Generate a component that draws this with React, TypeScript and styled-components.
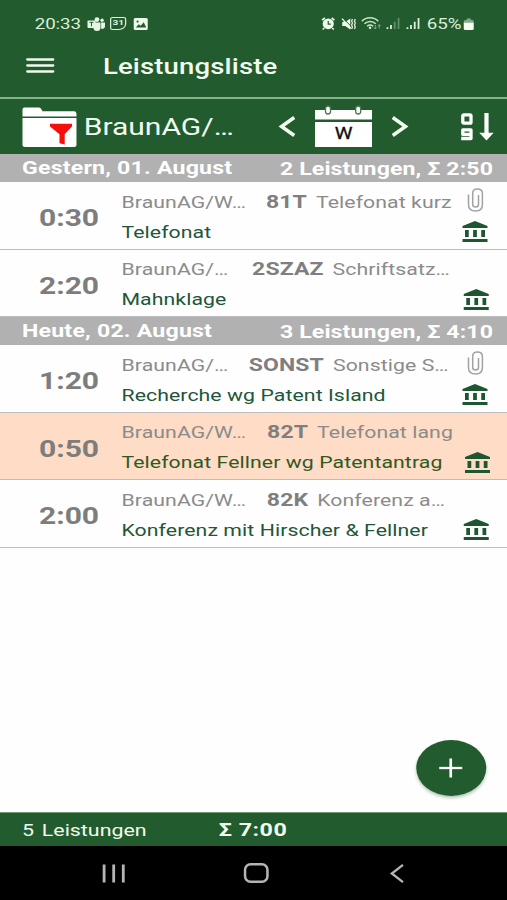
import React from "react";
import styled, { createGlobalStyle } from "styled-components";
import { MdAccountBalance } from "react-icons/md";

const GREEN = "#225b2d";
const INK = "#f1fbee";

const GlobalStyle = createGlobalStyle`
  * { box-sizing: border-box; }
  body { margin: 0; overflow: hidden; background: #fdfdfd; }
`;

const Screen = styled.div`
  width: 405.6px;
  height: 900px;
  display: flex;
  flex-direction: column;
  transform: scaleX(1.25);
  transform-origin: 0 0;
  overflow: hidden;
  font-family: Roboto, sans-serif;
  background: #fefefe;
  position: relative;
`;

const Icon = styled.svg<{ $w: number; $h: number }>`
  display: block;
  flex: none;
  width: ${(p) => p.$w / 1.25}px;
  height: ${(p) => p.$h}px;
  overflow: visible;
`;

const AppHeader = styled.header`
  height: 99px;
  flex: none;
  background: ${GREEN};
  color: ${INK};
  border-bottom: 2.5px solid #86b38b;
`;

const StatusBar = styled.div`
  height: 46px;
  padding: 1px 26.8px 0 27.8px;
  display: flex;
  align-items: center;
  justify-content: space-between;
  font-size: 15px;
  color: #dcefd9;
`;

const StatusGroup = styled.div<{ $gap: number }>`
  display: flex;
  align-items: center;
  gap: ${(p) => p.$gap}px;
`;

const Clock = styled.span`
  width: 37.6px;
  font-size: 15px;
  letter-spacing: -0.1px;
`;

const Percent = styled.span`
  margin: 0 -2.6px 0 1px;
  letter-spacing: -0.1px;
`;

const TitleBar = styled.div`
  height: 40px;
  padding-left: 20.8px;
  display: flex;
  align-items: center;
  gap: 39.2px;
`;

const Title = styled.h1`
  margin: 0;
  padding-top: 1px;
  font-size: 22px;
  font-weight: 500;
  line-height: 40px;
  letter-spacing: 0.12px;
`;

const FilterBar = styled.div`
  height: 55px;
  flex: none;
  padding: 0 10.6px 0 17.6px;
  background: ${GREEN};
  color: ${INK};
  display: flex;
  align-items: center;
`;

const Matter = styled.span`
  width: 162.2px;
  padding: 1px 0 0 6.2px;
  font-size: 24px;
  line-height: 54px;
`;

const PeriodNav = styled.div`
  flex: 1;
  display: flex;
  align-items: center;
  gap: 15.6px;
`;

const GroupHeader = styled.div`
  height: 28px;
  flex: none;
  padding: 0 11.2px 0 17.6px;
  display: flex;
  justify-content: space-between;
  align-items: center;
  background: #b1b1b1;
  color: #fff;
  font-size: 18.5px;
  font-weight: 700;
  letter-spacing: 0.16px;
`;

const GroupTotal = styled.span`
  padding-top: 1px;
  letter-spacing: 0.08px;
`;

const Entry = styled.article<{ $selected?: boolean }>`
  height: 67.5px;
  flex: none;
  display: grid;
  grid-template-columns: 97.2px 1fr 44px;
  background: ${(p) => (p.$selected ? "#fedcc6" : "#fefefe")};
  border-bottom: 1.5px solid #bcbcbc;
`;

const Duration = styled.div`
  padding: 4px 0 0 31.2px;
  color: #7d7d7d;
  font-size: 24px;
  font-weight: 700;
  line-height: 64px;
`;

const Details = styled.div`
  padding-top: 4.5px;
  white-space: nowrap;
  line-height: 30px;
  letter-spacing: 0.06px;
`;

const Activity = styled.div<{ $matter: number }>`
  display: grid;
  grid-template-columns: ${(p) => p.$matter}px auto 1fr;
  color: #8b8b8b;
  font-size: 17px;
`;

const Code = styled.b`
  color: #7f7f7f;
  font-size: 18.4px;
  margin-right: 7.2px;
  letter-spacing: 0.1px;
`;

const Note = styled.div<{ $selected?: boolean }>`
  color: ${(p) => (p.$selected ? "#31591f" : "#215638")};
  font-size: 17px;
`;

const Flags = styled.div<{ $clip?: boolean }>`
  height: 66px;
  padding: 6px ${(p) => (p.$clip ? 13.5 : 12.3)}px 4px 0;
  display: flex;
  flex-direction: column;
  align-items: flex-end;
  justify-content: ${(p) => (p.$clip ? "space-between" : "flex-end")};
  color: #1d5630;

  > svg:last-child { flex: none; width: 24px; height: 24px; }
`;

const ClipBox = styled.div`
  padding-right: 5.4px;
`;

const List = styled.main`
  flex: 1;
`;

const Summary = styled.footer`
  height: 34px;
  flex: none;
  padding-left: 17.6px;
  background: ${GREEN};
  border-top: 1px solid #6c9b72;
  color: ${INK};
  display: flex;
  align-items: center;
`;

const Count = styled.span`
  width: 157.4px;
  font-size: 17.1px;
  word-spacing: 2px;
`;

const Total = styled.b`
  font-size: 18.6px;
  letter-spacing: 0.4px;
`;

const SystemNav = styled.nav`
  height: 54px;
  flex: none;
  background: #000;
  padding-left: 82px;
  display: flex;
  align-items: center;
`;

const NavKey = styled.div<{ $w: number }>`
  width: ${(p) => p.$w}px;
`;

const AddButton = styled.button`
  position: absolute;
  right: 17px;
  bottom: 104px;
  width: 56px;
  height: 56px;
  padding: 0;
  border: 0;
  border-radius: 50%;
  background: ${GREEN};
  display: grid;
  place-items: center;
  box-shadow: 0 2px 3px rgba(60, 110, 60, 0.4);
`;

type Drawing = { w: number; h: number; children: React.ReactNode };
const Glyph = ({ w, h, children }: Drawing) => (
  <Icon $w={w} $h={h} viewBox={`0 0 ${w} ${h}`} preserveAspectRatio="none" fill="none">
    {children}
  </Icon>
);

const TeamsIcon = () => (
  <Glyph w={18} h={14}>
    <g fill="#e6f5e3">
      <circle cx="9.5" cy="2.6" r="2.4" />
      <circle cx="14.6" cy="3.2" r="1.7" />
      <path d="M6 5.5h7v5a3.5 3.5 0 0 1-7 0zM13.6 5.5H17.5v4a2.6 2.6 0 0 1-3.9 2z" />
      <rect x="0" y="3.5" width="8" height="7.5" rx="0.8" />
    </g>
    <path d="M2 5.3h4M4 5.3v4" stroke={GREEN} strokeWidth="1" />
  </Glyph>
);

const CalendarBadge = styled.span`
  width: 12.8px;
  height: 13px;
  margin-right: 1.4px;
  border: 1.3px solid #dcefd9;
  border-radius: 2px 2px 6px 2px;
  font-size: 8px;
  font-weight: 700;
  line-height: 10.5px;
  text-align: center;
`;

const PictureIcon = () => (
  <Glyph w={14} h={12}>
    <rect width="14" height="12" rx="1.5" fill="#eef9ea" />
    <path d="M2 9.5l3-3.3 2 1.6 3-3.6 2.5 5.3z" fill={GREEN} />
    <circle cx="3.8" cy="3.6" r="1.1" fill={GREEN} />
  </Glyph>
);

const AlarmIcon = () => (
  <Glyph w={14} h={13}>
    <path d="M.8 3.2L3.6 1M13.2 3.2L10.4 1M3 11l-1.500 1.500M11 11l1.500 1.500" stroke="#eef9ea" strokeWidth="1.6" />
    <ellipse cx="7" cy="6.8" rx="5.6" ry="5.4" fill="#eef9ea" />
    <path d="M7 4v3.2h2.6" stroke={GREEN} strokeWidth="1.2" />
  </Glyph>
);

const MuteIcon = () => (
  <Glyph w={15} h={12}>
    <path d="M1 4h3l5-3.500v11L4 8H1z" fill="#eef9ea" />
    <path d="M1.600 0L9.500 8" stroke={GREEN} strokeWidth="1" />
    <path d="M.8.6L9.500 10.500" stroke="#eef9ea" strokeWidth="1.400" />
    <path d="M11.200 1l-.8 2 .8 2-.8 2 .8 2-.8 2M14 1l-.8 2 .8 2-.8 2 .8 2-.8 2" stroke="#dcefd9" strokeWidth="1.300" />
  </Glyph>
);

const WifiIcon = () => (
  <Glyph w={20} h={13}>
    <g stroke="#c9e2c8" strokeWidth="1.5">
      <path d="M.6 4.2C5-.4 12.6-.4 17 4.2" />
      <path d="M3.2 6.8c3.3-3.2 8-3.2 11.3 0" />
      <path d="M5.8 9.2c1.9-1.6 4.2-1.6 6.1 0" />
    </g>
    <circle cx="8.8" cy="10.8" r="1.3" fill="#dcefd9" />
    <path d="M14 8v4m-1.500-1.500L14 12l1.200-1.500M18 11.500V7.600m-1.400 1.400L18 7.600l1.300 1.400" stroke="#7ea983" strokeWidth="1" />
  </Glyph>
);

const SignalIcon = ({ faint }: { faint?: boolean }) => (
  <Glyph w={14} h={11}>
    <path d="M1.2 9.2V11M4.700 7V11" stroke="#dcefd9" strokeWidth="1.800" />
    <path d="M8.500 3.800V11M12.300 0V11" stroke={faint ? "#5f9166" : "#dcefd9"} strokeWidth="1.800" />
  </Glyph>
);

const BatteryIcon = () => (
  <Glyph w={10} h={12}>
    <path d="M0 4.500V3.500a1.500 1.500 0 0 1 1.500-1.500H3V.5h4V2h1.500A1.500 1.500 0 0 1 10 3.500v1z" fill="#82ab86" />
    <path d="M0 4.500h10v6a1.500 1.500 0 0 1-1.500 1.500h-7A1.500 1.500 0 0 1 0 10.500z" fill="#f6fdf3" />
  </Glyph>
);

const MenuIcon = () => (
  <Glyph w={28} h={16}>
    <path d="M1 1.500h26M1 7.500h26M1 13.500h26" stroke={INK} strokeWidth="2.300" strokeLinecap="round" />
  </Glyph>
);

const FolderFilterIcon = () => (
  <Glyph w={54} h={40}>
    <path d="M0 9.500V2.200Q0 .5 2 .5h14.500q1.500 0 2.300 1.500l1.200 2.300h31.500Q54 4.300 54 6.500v3z" fill="#fff" />
    <path d="M0 11h54v26.500q0 2.500-2.500 2.500h-49Q0 40 0 37.500z" fill="#fff" />
    <path d="M27.500 16.800h22v2.600l-7.300 7.800v10.300l-5.200-1.300v-9l-9.500-7.800z" fill="#f80d0d" />
  </Glyph>
);

const PrevIcon = () => (
  <Glyph w={17} h={21}>
    <path d="M15.500 1.500L2.800 10.500l12.700 9" stroke={INK} strokeWidth="3.500" />
  </Glyph>
);

const NextIcon = () => (
  <Glyph w={17} h={21}>
    <path d="M1.500 1.500l12.700 9L1.500 19.500" stroke={INK} strokeWidth="3.500" />
  </Glyph>
);

const Calendar = styled.div`
  position: relative;
  width: 45.6px;
  height: 41px;
`;

const CalendarLetter = styled.span`
  position: absolute;
  inset: 15px 0 0;
  text-align: center;
  color: #111;
  font-size: 16px;
  line-height: 26px;
  -webkit-text-stroke: 0.3px #111;
`;

const WeekCalendar = () => (
  <Calendar>
    <Glyph w={57} h={41}>
      <path d="M0 4h57v9.500H0zM0 16h57v25H0z" fill="#fff" />
      <g fill="#fff" stroke="#46754e" strokeWidth="1.300">
        <rect x="10.500" y="0" width="5" height="8" rx="2.500" />
        <rect x="40.700" y="0" width="5" height="8" rx="2.500" />
      </g>
    </Glyph>
    <CalendarLetter>W</CalendarLetter>
  </Calendar>
);

const SortIcon = () => (
  <Glyph w={34} h={27}>
    <g stroke="#fff" strokeWidth="3.300">
      <rect x="2.800" y="1.800" width="8.200" height="8.400" rx="1" />
      <path d="M11 21.400H2.800V16.800H11V25.500H1.200" strokeLinejoin="round" />
      <path d="M26.500 0v21" strokeWidth="4.200" />
    </g>
    <path d="M19.300 19.800h14.400L26.500 27.400z" fill="#fff" />
  </Glyph>
);

const ClipIcon = () => (
  <Glyph w={16} h={24}>
    <path
      d="M11 7v9.500q0 2.500-2.900 2.500T5.200 16.500V5Q5.200 1 10 1t4.900 4.300V16.500Q14.900 23 8.200 23 1 23 1 16.500V6.500"
      stroke="#a2a2a2"
      strokeWidth="1.500"
    />
  </Glyph>
);

const RecentsIcon = () => (
  <Glyph w={23} h={19}>
    <path d="M1.600.5v18M11.200.5v18M20.800.5v18" stroke="#b5b5b5" strokeWidth="2.800" />
  </Glyph>
);

const HomeIcon = () => (
  <Glyph w={25} h={20}>
    <rect x="1.300" y="1.200" width="22.400" height="17.600" rx="5.500" stroke="#b5b5b5" strokeWidth="2.500" />
  </Glyph>
);

const BackIcon = () => (
  <Glyph w={14} h={19}>
    <path d="M13 .8L1.800 9.500 13 18.200" stroke="#b5b5b5" strokeWidth="2.300" />
  </Glyph>
);

const PlusIcon = () => (
  <Glyph w={24} h={20}>
    <path d="M.5 10h23" stroke="#fff" strokeWidth="2.300" />
    <path d="M12 .5v19" stroke="#fff" strokeWidth="2.700" />
  </Glyph>
);

type Service = {
  time: string;
  matter: string;
  matterWidth: number;
  code: string;
  activity: string;
  note: string;
  clip?: boolean;
  selected?: boolean;
};

const groups: { day: string; total: string; services: Service[] }[] = [
  {
    day: "Gestern, 01. August",
    total: "2 Leistungen, Σ 2:50",
    services: [
      { time: "0:30", matter: "BraunAG/W…", matterWidth: 115.6, code: "81T", activity: "Telefonat kurz", note: "Telefonat", clip: true },
      { time: "2:20", matter: "BraunAG/…", matterWidth: 104.5, code: "2SZAZ", activity: "Schriftsatz…", note: "Mahnklage" },
    ],
  },
  {
    day: "Heute, 02. August",
    total: "3 Leistungen, Σ 4:10",
    services: [
      { time: "1:20", matter: "BraunAG/…", matterWidth: 101.8, code: "SONST", activity: "Sonstige S…", note: "Recherche wg Patent Island", clip: true },
      { time: "0:50", matter: "BraunAG/W…", matterWidth: 116.5, code: "82T", activity: "Telefonat lang", note: "Telefonat Fellner wg Patentantrag", selected: true },
      { time: "2:00", matter: "BraunAG/W…", matterWidth: 116.3, code: "82K", activity: "Konferenz a…", note: "Konferenz mit Hirscher & Fellner" },
    ],
  },
];

const ServiceEntry = ({ s }: { s: Service }) => (
  <Entry $selected={s.selected}>
    <Duration>{s.time}</Duration>
    <Details>
      <Activity $matter={s.matterWidth}>
        <span>{s.matter}</span>
        <Code>{s.code}</Code>
        <span>{s.activity}</span>
      </Activity>
      <Note $selected={s.selected}>{s.note}</Note>
    </Details>
    <Flags $clip={s.clip}>
      {s.clip && (
        <ClipBox>
          <ClipIcon />
        </ClipBox>
      )}
      <MdAccountBalance />
    </Flags>
  </Entry>
);

export default function App() {
  return (
    <>
      <GlobalStyle />
      <Screen>
        <AppHeader>
          <StatusBar>
            <StatusGroup $gap={4.2}>
              <Clock>20:33</Clock>
              <TeamsIcon />
              <CalendarBadge>31</CalendarBadge>
              <PictureIcon />
            </StatusGroup>
            <StatusGroup $gap={4.4}>
              <AlarmIcon />
              <MuteIcon />
              <WifiIcon />
              <SignalIcon faint />
              <SignalIcon />
              <Percent>65%</Percent>
              <BatteryIcon />
            </StatusGroup>
          </StatusBar>
          <TitleBar>
            <MenuIcon />
            <Title>Leistungsliste</Title>
          </TitleBar>
        </AppHeader>
        <FilterBar>
          <FolderFilterIcon />
          <Matter>BraunAG/…</Matter>
          <PeriodNav>
            <PrevIcon />
            <WeekCalendar />
            <NextIcon />
          </PeriodNav>
          <SortIcon />
        </FilterBar>
        <List>
          {groups.map((g) => (
            <section key={g.day}>
              <GroupHeader>
                <span>{g.day}</span>
                <GroupTotal>{g.total}</GroupTotal>
              </GroupHeader>
              {g.services.map((s) => (
                <ServiceEntry key={s.time} s={s} />
              ))}
            </section>
          ))}
        </List>
        <Summary>
          <Count>5 Leistungen</Count>
          <Total>Σ 7:00</Total>
        </Summary>
        <SystemNav>
          <NavKey $w={112.6}>
            <RecentsIcon />
          </NavKey>
          <NavKey $w={117.6}>
            <HomeIcon />
          </NavKey>
          <BackIcon />
        </SystemNav>
        <AddButton aria-label="Neue Leistung">
          <PlusIcon />
        </AddButton>
      </Screen>
    </>
  );
}
